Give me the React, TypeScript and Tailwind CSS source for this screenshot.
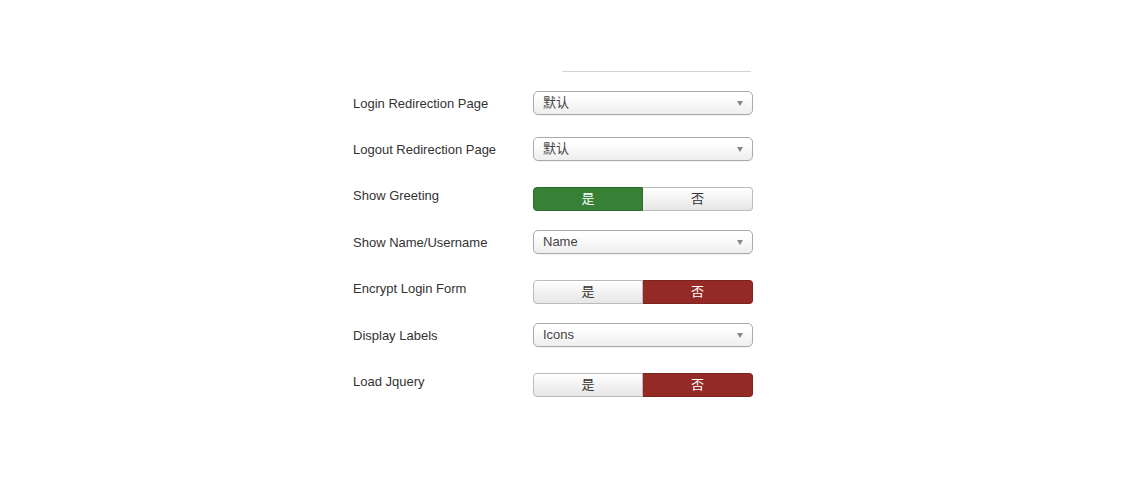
import React from "react";

const font = { fontFamily: '"Liberation Sans", Arial, "Noto Sans CJK SC", sans-serif' };

function Select({ value }: { value: string }) {
  return (
    <div className="relative flex h-[24px] w-[220px] items-center rounded-[5px] border border-[#aaaaaa] bg-gradient-to-b from-white from-[20%] to-[#eeeeee] pb-[1px] pl-[9px] text-[13px] text-[#444444] shadow-[0_1px_0_rgba(0,0,0,0.05)]">
      <span className="leading-none">{value}</span>
      <span className="absolute right-[9px] top-[9px] h-0 w-0 border-x-[3.5px] border-t-[5px] border-x-transparent border-t-[#888888]" />
    </div>
  );
}

function Toggle({ yes }: { yes: boolean }) {
  const off = "bg-gradient-to-b from-white to-[#e6e6e6] text-[#333333] border-[#bbbbbb]";
  return (
    <div className="flex h-[24px] w-[220px] text-[13px]">
      <div
        className={`flex w-[110px] items-center justify-center rounded-l-[4px] border ${
          yes ? "border-[#2d6a2d] bg-[#378137] text-white" : off
        }`}
      >
        是
      </div>
      <div
        className={`flex w-[110px] items-center justify-center rounded-r-[4px] border border-l-0 ${
          yes ? off : "border-[#7d2320] bg-[#942a25] text-white"
        }`}
      >
        否
      </div>
    </div>
  );
}

type Row = { label: string; kind: "select" | "toggle"; value?: string; yes?: boolean; h: string };

const rows: Row[] = [
  { label: "Login Redirection Page", kind: "select", value: "默认", h: "h-[46px]" },
  { label: "Logout Redirection Page", kind: "select", value: "默认", h: "h-[46px]" },
  { label: "Show Greeting", kind: "toggle", yes: true, h: "h-[47px]" },
  { label: "Show Name/Username", kind: "select", value: "Name", h: "h-[46px]" },
  { label: "Encrypt Login Form", kind: "toggle", yes: false, h: "h-[47px]" },
  { label: "Display Labels", kind: "select", value: "Icons", h: "h-[46px]" },
  { label: "Load Jquery", kind: "toggle", yes: false, h: "h-[46px]" },
];

export default function App() {
  return (
    <div className="h-[498px] w-[1140px] bg-white pt-[71px]" style={font}>
      <div className="ml-[562px] h-px w-[189px] bg-[#d4d4d4]" />
      <div className="mt-[19px] flex flex-col pl-[353px]">
        {rows.map((r) => (
          <div key={r.label} className={`flex items-start ${r.h}`}>
            <div className="w-[180px] pt-[4px] text-[13px] leading-[18px] text-[#333333]">{r.label}</div>
            {r.kind === "select" ? (
              <Select value={r.value!} />
            ) : (
              <div className="mt-[4px]">
                <Toggle yes={!!r.yes} />
              </div>
            )}
          </div>
        ))}
      </div>
    </div>
  );
}
